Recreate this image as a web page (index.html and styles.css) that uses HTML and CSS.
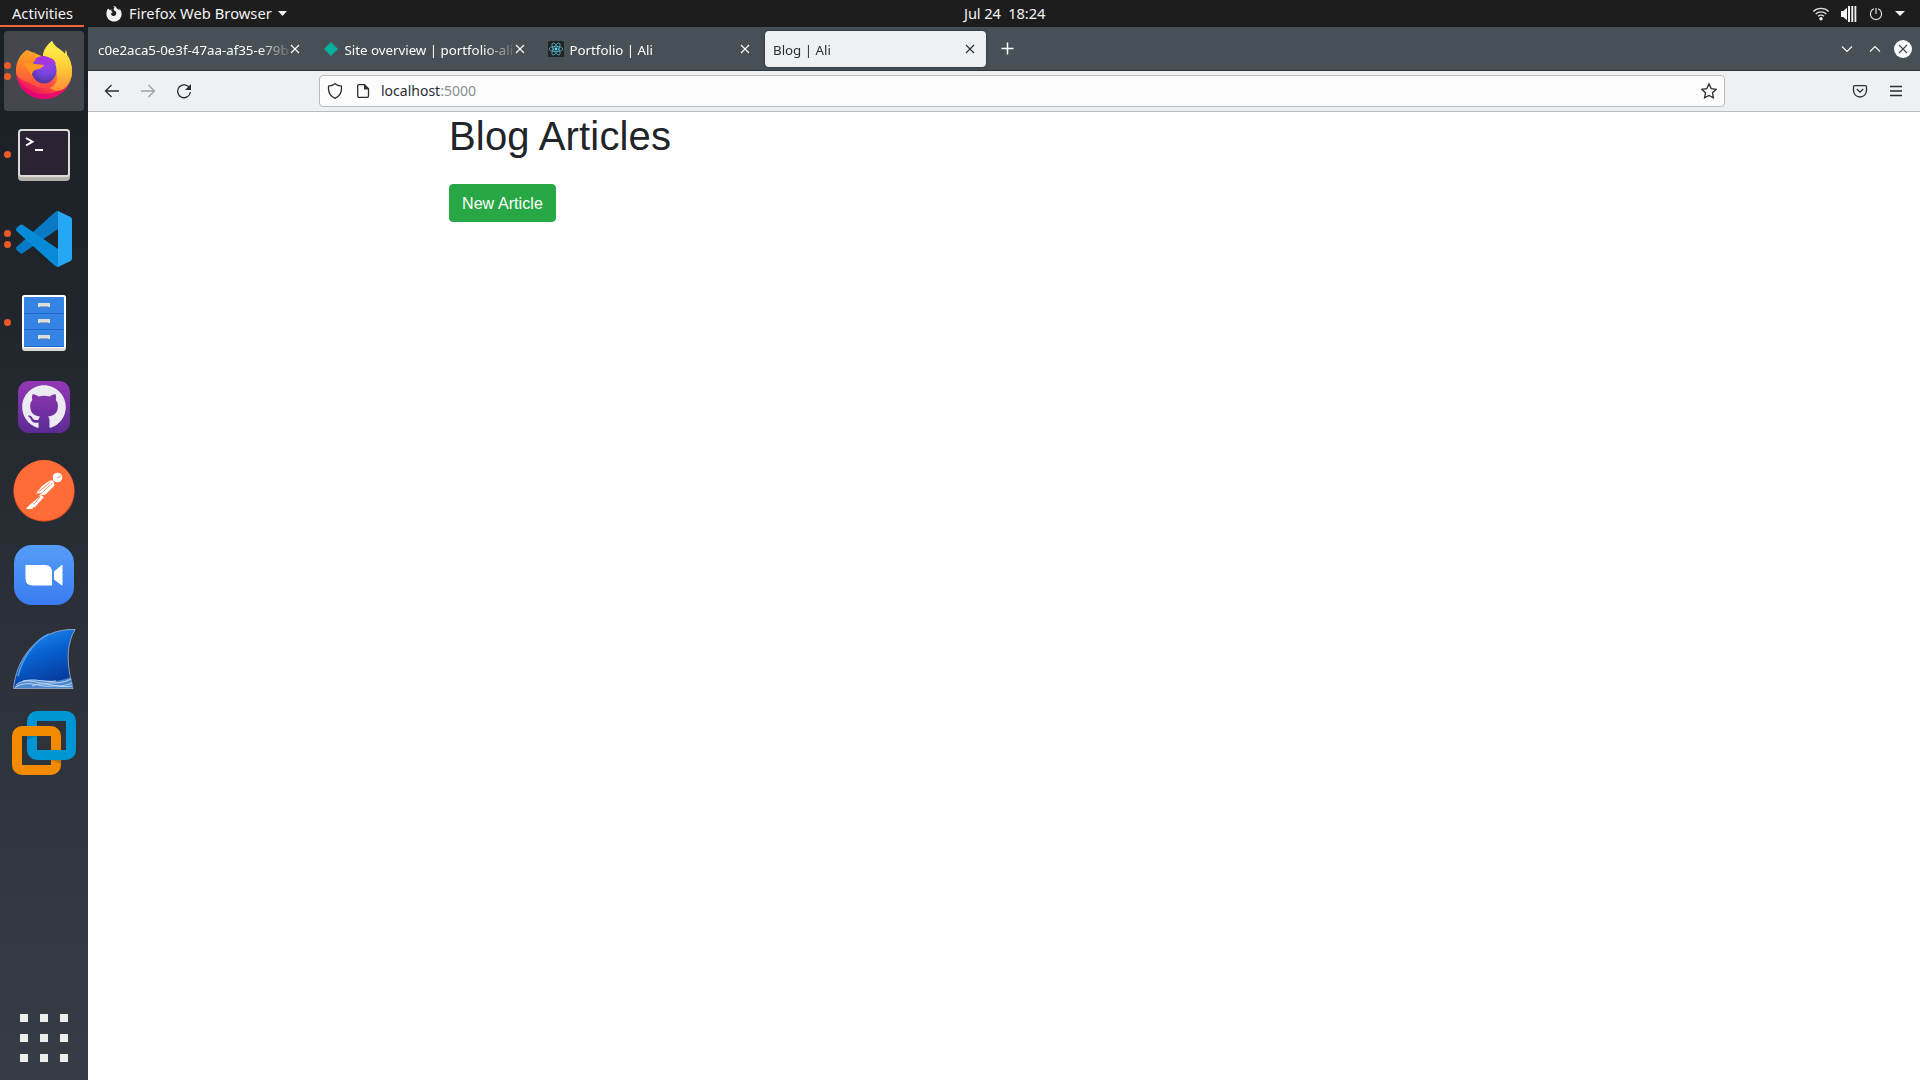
FILE: index.html
```html
<!DOCTYPE html>
<html lang="en">
<head>
<meta charset="utf-8">
<title>Blog | Ali</title>
<link rel="stylesheet" href="styles.css">
</head>
<body>
<header class="topbar">
  <div class="activities"><span>Activities</span></div>
  <div class="app-menu">
    <svg width="16" height="16" viewBox="0 0 16 16"><path fill="#f2f2f2" d="M7 .2 8.600 1.600C7.500 2.500 7.400 3.800 8.100 4.500 9.800 5 10.600 6.500 10.200 8c-.5 1.700-2.300 2.400-3.800 1.700C5.300 9.200 4.900 8 5.300 7l1.700-.6L5.400 5.200 5.300 3.300 3.900 4.200 2.200 2.600C.8 4.200.2 6.300.5 8.800 1 12.900 4.200 15.600 8 15.600c4.300 0 7.600-3.300 7.600-7.600 0-2-.7-4-2.300-5.500l.2 2.100C12.500 2.500 10 2.600 9.800.4z"/></svg>
    <span class="app-name">Firefox Web Browser</span>
    <svg width="9" height="5" viewBox="0 0 9 5"><path fill="#f2f2f2" d="M0 0h9L4.500 5z"/></svg>
  </div>
  <div class="clock">Jul 24&nbsp; 18:24</div>
  <div class="status">
    <svg class="wifi" width="18" height="14" viewBox="0 0 18 14"><g fill="none" stroke="#dedede" stroke-width="1.300"><path d="M1.300 4.500a11 11 0 0 1 15.400 0M3.700 7a7.500 7.500 0 0 1 10.600 0M6.100 9.300a4.100 4.100 0 0 1 5.800 0"/></g><circle cx="9" cy="11.700" r="1.700" fill="#f2f2f2"/></svg>
    <svg class="volume" width="16" height="16" viewBox="0 0 16 16"><path fill="#f2f2f2" d="M0 5h2.300L6 1.800v12.400L2.300 11H0zM7 0h2v16H7zM10.300 0h1.900v16h-1.900zM13.500 0h1.800v16h-1.800z"/></svg>
    <svg class="power" width="14" height="14" viewBox="0 0 14 14"><path fill="none" stroke="#dedede" stroke-width="1.200" d="M5 1.700a5.600 5.600 0 1 0 4 0M7 1v6"/></svg>
    <svg width="10" height="5" viewBox="0 0 10 5"><path fill="#f2f2f2" d="M0 0h10L5 5z"/></svg>
  </div>
</header>
<div class="desktop">
  <nav class="dock">
    <div class="launcher focused">
      <svg viewBox="0 0 80 80">
        <defs>
          <linearGradient id="fx-body" x1=".8" y1=".1" x2=".3" y2="1"><stop offset="0" stop-color="#ffe24a"/><stop offset=".35" stop-color="#ffa22c"/><stop offset=".65" stop-color="#ff4f3c"/><stop offset="1" stop-color="#e5006d"/></linearGradient>
          <linearGradient id="fx-flame" x1=".5" y1="0" x2=".5" y2="1"><stop offset="0" stop-color="#fff44f"/><stop offset=".5" stop-color="#ffd039"/><stop offset="1" stop-color="#ff8f36"/></linearGradient>
          <linearGradient id="fx-head" x1=".3" y1="0" x2=".4" y2="1"><stop offset="0" stop-color="#ffa91f"/><stop offset=".5" stop-color="#ff762d"/><stop offset="1" stop-color="#ff4b45"/></linearGradient>
          <radialGradient id="fx-globe" cx=".6" cy=".2" r=".9"><stop offset="0" stop-color="#a93bf0"/><stop offset=".5" stop-color="#7a43e0"/><stop offset="1" stop-color="#45308c"/></radialGradient>
        </defs>
        <path fill="url(#fx-body)" d="M23 19c-7 5-11 13-11 21 0 16 12.500 28 28 28s28-12 28-28c0-6-2-12-5-16l-1-5-1 4c-4-5-11-7-13-13-5 4-8 9-8 16z"/>
        <path fill="#e6007a" opacity=".75" d="M13 46c3 13 14 22 27 22s24-8 27-21c-5 10-15 16-27 16-13 0-22-7-27-17z"/>
        <path fill="url(#fx-flame)" d="M48 10c2 6 9 8 13 13l1-4 1 5c3 4 5 10 5 16 0 8-3 13-7 17-5 4-11 3-15 0 6-3 8-8 7-14-1-8-7-14-14-18 0-6 4-11 9-15z"/>
        <path fill="url(#fx-head)" d="M12 40c0-9 4-17 11-21l-1 5c2-1 4 0 5 1l4-4v7l9 6v14l12 2c-3 7-13 9-20 5-7-4-20-6-20-15z"/>
        <ellipse cx="40" cy="39" rx="12.500" ry="13.500" fill="url(#fx-globe)"/>
        <path fill="#a735df" d="M31 28c5-4 11-4 16 0l-2-1c4 0 6 3 7 6l-5-2c-3 4-9 4-14 0z"/>
        <path fill="#ff9821" d="M19 33c4-2 8-1 12 0l9 1c-1 3-5 4-9 5-2 1-3 3-3 5-3-2-4-8-9-11z"/>
      </svg>
      <i class="dot upper"></i><i class="dot lower"></i>
    </div>
    <div class="launcher">
      <svg viewBox="0 0 80 80">
        <rect x="14" y="16" width="52" height="50" rx="4" fill="#b2aea9"/><rect x="14" y="14" width="52" height="48" rx="3.500" fill="#dedbd6"/><rect x="16" y="16" width="48" height="44" rx="1.500" fill="#2b2334"/>
        <path fill="none" stroke="#fff" stroke-width="2" d="m22 23 6.500 3.700L22 30.500M31 35h8"/>
      </svg>
      <i class="dot"></i>
    </div>
    <div class="launcher">
      <svg viewBox="0 0 80 80">
        <path fill="#0879c2" d="M54 12v18L19 54q-1.500 1-3 0l-3.500-3q-1-1.500 0-3L50 14q2-2 4-2z"/>
        <path fill="#078ad7" d="M54 68V50L19 26q-1.500-1-3 0l-3.500 3q-1 1.500 0 3L50 66q2 2 4 2z"/>
        <path fill="#26a7f3" d="m54 12 12.500 6q1.500 1 1.500 2.500v39q0 1.500-1.500 2.500L54 68z"/>
      </svg>
      <i class="dot upper"></i><i class="dot lower"></i>
    </div>
    <div class="launcher">
      <svg viewBox="0 0 80 80">
        <rect x="18" y="12" width="44" height="56" rx="3" fill="#dcd9d5"/><rect x="18" y="12" width="44" height="53" rx="3" fill="#fff"/><rect x="20" y="14" width="40" height="50" rx="1" fill="#3584e4"/>
        <path stroke="#1a68c9" d="M20 30.500h40M20 46.500h40M20 63.500h40"/>
        <path fill="#deddda" d="M34 20h12v4h-2v-1h-8v1h-2zM34 36h12v4h-2v-1h-8v1h-2zM34 52h12v4h-2v-1h-8v1h-2z"/><path stroke="#a0a3aa" d="M36 23.500h8M36 39.500h8M36 55.500h8"/>
      </svg>
      <i class="dot"></i>
    </div>
    <div class="launcher">
      <svg viewBox="0 0 80 80">
        <defs><linearGradient id="gh" x2="0" y2="1"><stop offset="0" stop-color="#9438b4"/><stop offset="1" stop-color="#5c2b94"/></linearGradient></defs>
        <rect x="14" y="14" width="52" height="52" rx="11" fill="url(#gh)"/>
        <path transform="translate(18.200 18.200) scale(2.725)" fill="#eceaf2" d="M8 0C3.580 0 0 3.580 0 8c0 3.540 2.290 6.530 5.470 7.590.4.070.55-.17.55-.38 0-.19-.01-.82-.01-1.490-2.010.37-2.530-.49-2.690-.94-.09-.23-.48-.94-.82-1.130-.28-.15-.68-.52-.01-.53.63-.01 1.080.58 1.230.82.72 1.210 1.870.87 2.330.66.070-.52.28-.87.51-1.070-1.780-.2-3.640-.89-3.640-3.950 0-.87.31-1.590.82-2.150-.08-.2-.36-1.020.08-2.120 0 0 .67-.21 2.200.82.64-.18 1.320-.27 2-.27s1.360.09 2 .27c1.530-1.040 2.200-.82 2.200-.82.44 1.100.16 1.920.08 2.120.51.56.82 1.270.82 2.150 0 3.070-1.870 3.750-3.650 3.950.29.25.54.73.54 1.480 0 1.070-.01 1.930-.01 2.200 0 .21.15.46.55.38A8.010 8.010 0 0 0 16 8c0-4.420-3.580-8-8-8z"/>
      </svg>
    </div>
    <div class="launcher">
      <svg viewBox="0 0 80 80">
        <circle cx="40" cy="40" r="30.700" fill="#df4d1d"/><circle cx="40" cy="39.300" r="30.200" fill="#ff6c37"/>
        <circle cx="53.500" cy="26.500" r="4.800" fill="#fff"/>
        <path fill="#fff" d="m49.500 29.500 1 5-9 9-7 1.500 3-3-5.500.5 6-7.500 8-5.500zM37 44.500l3 1.500-9 10-2.500.5.500 1.500h-7l3.500-4z"/>
        <path fill="none" stroke="#ff6c37" stroke-width=".8" d="m35 40.500 11.500-9.500M37 42.500 48.500 32M30 53l6-7M53 27l4-2"/>
      </svg>
    </div>
    <div class="launcher">
      <svg viewBox="0 0 80 80">
        <defs><linearGradient id="zm" x2="0" y2="1"><stop offset="0" stop-color="#569ef8"/><stop offset="1" stop-color="#397bef"/></linearGradient></defs>
        <rect x="10" y="10" width="60" height="60" rx="18" fill="url(#zm)"/>
        <path fill="#fff" d="M21.500 30H41q7 0 7 7v13.500H29q-7.500 0-7.500-7zM50 36.500l7.500-6.200q1-.7 1 .5v19q0 1.200-1 .5L50 44.500z"/>
      </svg>
    </div>
    <div class="launcher">
      <svg viewBox="0 0 80 80">
        <defs><linearGradient id="ws" x1=".3" y1="0" x2=".7" y2="1"><stop offset="0" stop-color="#1f8cf0"/><stop offset=".4" stop-color="#0862d1"/><stop offset="1" stop-color="#053393"/></linearGradient></defs>
        <path fill="url(#ws)" stroke="#a4b7cd" stroke-width=".8" d="M9.500 69.500C12 41 33 9 71 10.500c-8 14-8 29-5 46l3 13z"/>
        <path fill="none" stroke="#4ba0f4" stroke-width="1.500" d="M14 57C19 38 31 21 45 15"/>
        <path fill="#4d88cf" d="M10 69c4-5 9-8 16-8 14-1 26 4 41-3l2 11z"/>
        <path fill="none" stroke="#c8ddf4" stroke-width=".9" d="M12 66c11-9 21 0 33-2 9 0 14 0 22-4M11 68c15-8 24 1 37-1 8 0 13 0 20-3M19 62c14-3 22 2 33 0M28 67c13-6 24 3 40 0"/>
      </svg>
    </div>
    <div class="launcher">
      <svg viewBox="0 0 80 80">
        <rect x="28" y="13" width="39" height="39" rx="5" fill="none" stroke="#0095d5" stroke-width="10"/>
        <path fill="#007cb0" d="M23 33h10l-10 4z"/>
        <rect x="13" y="28" width="39" height="39" rx="5" fill="none" stroke="#f38b00" stroke-width="10"/>
        <path fill="#0095d5" d="M46 47h12v10H46z"/><path fill="#bd7416" d="M47 57h10v4z"/>
      </svg>
    </div>
    <div class="app-grid"><i></i><i></i><i></i><i></i><i></i><i></i><i></i><i></i><i></i></div>
  </nav>
  <main class="browser">
    <div class="tabs">
      <div class="tab"><span class="title">c0e2aca5-0e3f-47aa-af35-e79b</span><svg class="close" viewBox="0 0 10 10"><path d="m1 1 8 8M9 1 1 9"/></svg></div>
      <div class="tab"><svg class="favicon" viewBox="0 0 16 16"><path fill="#05b0a0" d="m8 1 7 7-7 7-7-7z"/></svg><span class="title">Site overview | portfolio-ali</span><svg class="close" viewBox="0 0 10 10"><path d="m1 1 8 8M9 1 1 9"/></svg></div>
      <div class="tab"><svg class="favicon" viewBox="0 0 16 16"><rect width="16" height="16" rx="1.500" fill="#222"/><g fill="none" stroke="#53b5cd" stroke-width=".8"><ellipse cx="8" cy="8" rx="6.800" ry="2.600"/><ellipse cx="8" cy="8" rx="6.800" ry="2.600" transform="rotate(60 8 8)"/><ellipse cx="8" cy="8" rx="6.800" ry="2.600" transform="rotate(120 8 8)"/></g><circle cx="8" cy="8" r="1.400" fill="#61dafb"/></svg><span class="title">Portfolio | Ali</span><svg class="close" viewBox="0 0 10 10"><path d="m1 1 8 8M9 1 1 9"/></svg></div>
      <div class="tab active"><span class="title">Blog | Ali</span><svg class="close" viewBox="0 0 10 10"><path d="m1 1 8 8M9 1 1 9"/></svg></div>
      <svg class="new-tab" viewBox="0 0 13 13"><path d="M6.500.5v12M.5 6.500h12"/></svg>
      <div class="window-buttons">
        <svg width="12" height="8" viewBox="0 0 12 8"><path d="m1 1.500 5 5 5-5"/></svg>
        <svg width="12" height="8" viewBox="0 0 12 8"><path d="m1 6.500 5-5 5 5"/></svg>
        <svg width="18" height="18" viewBox="0 0 18 18"><circle cx="9" cy="9" r="9" fill="#fcfcfc"/><path class="cross" d="m5 5 8 8M13 5l-8 8"/></svg>
      </div>
    </div>
    <div class="toolbar">
      <svg class="tool" viewBox="0 0 16 16"><path d="M15 8H1.500M7.500 2l-6 6 6 6"/></svg>
      <svg class="tool disabled" viewBox="0 0 16 16"><path d="M1 8h13.500M8.500 2l6 6-6 6"/></svg>
      <svg class="tool" viewBox="0 0 16 16"><path d="M13.800 5.500A6.400 6.400 0 1 0 14.400 9"/><path class="solid" d="M15 1v6H9z"/></svg>
      <div class="urlbar">
        <svg class="shield" viewBox="0 0 16 16"><path d="M8 .8C6 2.400 4 3 1.600 3.200 1 8.500 2.700 13.200 8 15.300c5.300-2.100 7-6.800 6.400-12.100C12 3 10 2.400 8 .8z"/></svg>
        <svg class="page" viewBox="0 0 16 16"><path d="M4 1.700h5.500l4 4V13q0 1.300-1.300 1.300H4q-1.300 0-1.300-1.300V3q0-1.300 1.300-1.300z"/><path class="solid" d="M9 1.500v5h5z"/></svg>
        <span class="url">localhost<span>:5000</span></span>
        <svg class="star" viewBox="0 0 16 16"><path d="m8 1 2.200 4.600 5 .7-3.700 3.500.9 5L8 12.500l-4.400 2.300.9-5L.8 6.300l5-.7z"/></svg>
      </div>
      <div class="tools-right">
        <svg class="tool" viewBox="0 0 16 16"><path d="M2.700 2.700h10.600q1.200 0 1.200 1.200v3.600a6.500 6.500 0 0 1-13 0V3.900q0-1.200 1.200-1.200zM4.800 6 8 9.200 11.200 6"/></svg>
        <svg class="tool" viewBox="0 0 16 16"><path d="M2 3.500h12M2 8h12M2 12.500h12"/></svg>
      </div>
    </div>
    <section class="viewport">
      <div class="container">
        <h1>Blog Articles</h1>
        <a class="button">New Article</a>
      </div>
    </section>
  </main>
</div>
</body>
</html>
```
FILE: styles.css
```css
* { box-sizing: border-box; }
body { margin: 0; width: 1920px; height: 1080px; overflow: hidden; font-family: "Noto Sans", sans-serif; }
svg { display: block; flex: none; }

.topbar { display: grid; grid-template-columns: 84px 879px 82px 1fr; height: 27px; background: #1d1d1d; color: #f2f2f2; font-size: 14.667px; line-height: 27px; }
.activities { height: 27px; padding-left: 12px; border-bottom: 2px solid #f0653a; }
.app-menu { display: flex; align-items: center; padding-left: 22px; }
.app-name { margin: 0 6px 0 7px; letter-spacing: .06px; }
.clock { padding-left: 1px; letter-spacing: -.1px; white-space: nowrap; }
.status { display: flex; align-items: center; justify-content: flex-end; padding-right: 15px; }
.wifi { margin-right: 11px; }
.volume { margin-right: 12px; }
.power { margin-right: 12px; }

.desktop { display: flex; height: 1053px; }
.dock { display: flex; flex-direction: column; gap: 4px; width: 88px; padding: 4px; background: linear-gradient(#1a1e26, #20252c 25%, #2b3038 55%, #363d45); }
.launcher { position: relative; width: 80px; height: 80px; border-radius: 4px; }
.launcher svg { width: 80px; height: 80px; }
.focused { background: #44474d; }
.dot { position: absolute; left: 0; top: 36px; width: 7px; height: 7px; border-radius: 50%; background: #ed5b25; }
.dot.upper { top: 31px; }
.dot.lower { top: 42px; }
.app-grid { display: grid; grid-template-columns: repeat(3, 8px); gap: 12px; margin: auto 0 14px 16px; }
.app-grid i { height: 8px; background: #eeeeec; }

.browser { flex: 1; display: flex; flex-direction: column; background: #fff; }
.tabs { display: flex; align-items: center; gap: 4px; height: 44px; padding: 0 8px 0 2px; background: #475057; border-bottom: 1px solid #2f373e; color: #fcfcfc; font-size: 13.333px; }
.tab { display: flex; align-items: center; width: 221px; height: 36px; padding: 0 11px 0 8px; border-radius: 4px; }
.active { background: #eff0f2; color: #2b2f33; box-shadow: 0 0 3px #20262b; }
.favicon { width: 16px; height: 16px; margin-right: 5.500px; }
.title { flex: 1; min-width: 0; overflow: hidden; white-space: nowrap; line-height: 20px; padding-top: 2px; letter-spacing: -.02px; mask-image: linear-gradient(to left, rgba(0, 0, 0, .1), #000 32px); }
.close { width: 10px; height: 10px; }
.close path, .new-tab path, .window-buttons path { fill: none; stroke: currentColor; stroke-width: 1.100; }
.new-tab { width: 13px; height: 13px; margin-left: 11px; }
.new-tab path { stroke-width: 1.500; }
.window-buttons { display: flex; align-items: center; gap: 16px; margin-left: auto; }
.window-buttons svg:last-child { margin-left: -3px; }
.window-buttons .cross { stroke: #3f474e; }

.toolbar { display: flex; align-items: center; height: 41px; padding: 0 16px; background: #eff0f2; border-bottom: 1px solid #b9bbbd; color: #2a2e32; }
.tool { width: 16px; height: 16px; margin-right: 20px; }
.toolbar path { fill: none; stroke: currentColor; stroke-width: 1.300; }
.toolbar .solid { fill: currentColor; stroke: none; }
.disabled { color: #a0a1a3; }
.urlbar { display: flex; align-items: center; width: 1406px; height: 32px; margin-left: 107px; padding: 0 7px; border: 1px solid #b9bbbd; border-radius: 4px; background: #fcfcfc; }
.shield, .page, .star { width: 16px; height: 16px; }
.page { margin: 0 10px 0 12px; }
.url { flex: 1; font-size: 14px; line-height: 20px; }
.url span { color: #8b8d8f; }
.tools-right { display: flex; margin-left: auto; }
.tools-right .tool:last-child { margin-right: 0; }

.viewport { flex: 1; font-family: "Liberation Sans", Arial, sans-serif; color: #212529; }
.container { width: 1140px; margin: 0 auto; padding: 0 15px; }
h1 { margin: 0 0 24px; font-size: 40px; font-weight: 400; line-height: 48px; letter-spacing: .16px; }
.button { display: inline-block; padding: 7px 12px 5px; border: 1px solid #28a745; border-radius: 4px; background: #28a745; color: #fff; font-size: 16px; line-height: 24px; letter-spacing: .08px; }
```
